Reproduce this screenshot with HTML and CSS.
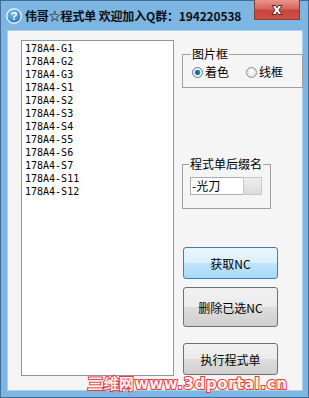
FILE: index.html
```html
<!DOCTYPE html>
<html>
<head>
<meta charset="utf-8">
<link rel="stylesheet" href="styles.css">
</head>
<body>
<div class="window">
  <div class="titlebar">
    <svg class="help-icon" width="16" height="16" viewBox="0 0 16 16">
      <defs>
        <radialGradient id="hg" cx="0.4" cy="0.3" r="0.8">
          <stop offset="0" stop-color="#7cc0f0"/>
          <stop offset="1" stop-color="#1f6db8"/>
        </radialGradient>
      </defs>
      <circle cx="8" cy="8" r="7.2" fill="url(#hg)" stroke="#ffffff" stroke-width="1.2"/>
      <text x="8" y="12.2" text-anchor="middle" font-family="Liberation Sans, sans-serif" font-weight="bold" font-size="11" fill="#ffffff">?</text>
    </svg>
    <div class="title">伟哥☆程式单 欢迎加入Q群：194220538</div>
    <div class="close-btn">
      <svg width="18" height="12" viewBox="0 0 18 12">
        <path d="M4 1.5 L7.5 1.5 L9 3.8 L10.5 1.5 L14 1.5 L11 6 L14 10.5 L10.5 10.5 L9 8.2 L7.5 10.5 L4 10.5 L7 6 Z" fill="#ffffff" stroke="#4a2a2a" stroke-width="1"/>
      </svg>
    </div>
  </div>
  <div class="client">
    <div class="listbox">
      <div class="item">178A4-G1</div>
      <div class="item">178A4-G2</div>
      <div class="item">178A4-G3</div>
      <div class="item">178A4-S1</div>
      <div class="item">178A4-S2</div>
      <div class="item">178A4-S3</div>
      <div class="item">178A4-S4</div>
      <div class="item">178A4-S5</div>
      <div class="item">178A4-S6</div>
      <div class="item">178A4-S7</div>
      <div class="item">178A4-S11</div>
      <div class="item">178A4-S12</div>
    </div>
    <div class="side">
      <fieldset class="group group-frame">
        <legend>图片框</legend>
        <div class="radio-row">
          <span class="radio checked"></span><span class="radio-label">着色</span>
          <span class="radio second"></span><span class="radio-label">线框</span>
        </div>
      </fieldset>
      <fieldset class="group group-suffix">
        <legend>程式单后缀名</legend>
        <div class="combo">
          <span class="combo-field">-光刀</span>
          <span class="combo-btn"></span>
        </div>
      </fieldset>
      <div class="btn btn-focus">获取NC</div>
      <div class="btn btn-tall">删除已选NC</div>
      <div class="btn btn-last">执行程式单</div>
    </div>
    <div class="watermark">三维网www.3dportal.cn</div>
  </div>
</div>
</body>
</html>
```
FILE: styles.css
```css
html, body {
  margin: 0;
  padding: 0;
  background: #7db5e3;
}
.window {
  position: relative;
  width: 309px;
  height: 398px;
  box-sizing: border-box;
  border: 1px solid #3f6d96;
  background: #7db5e3;
  display: flex;
  flex-direction: column;
  font-family: "Noto Sans CJK SC", sans-serif;
}
.titlebar {
  height: 29px;
  display: flex;
  align-items: center;
  position: relative;
}
.help-icon {
  margin-left: 5px;
  margin-top: 1px;
}
.title {
  margin-left: 3px;
  font-family: "Noto Sans CJK SC", sans-serif;
  font-weight: bold;
  font-size: 12px;
  color: #101010;
  white-space: nowrap;
  letter-spacing: -0.15px;
}
.close-btn {
  position: absolute;
  left: 253px;
  top: -1px;
  width: 46px;
  height: 20px;
  box-sizing: border-box;
  border: 1px solid #8a3a34;
  border-top: none;
  background: linear-gradient(#e7968d 0%, #d8675c 45%, #c8443a 55%, #cf5046 100%);
  display: flex;
  align-items: center;
  justify-content: center;
}
.client {
  position: relative;
  flex: 1;
  margin: 0 5px 6px 6px;
  border: 1px solid #a9d2f2;
  background: #f5f5f5;
  display: grid;
  grid-template-columns: 153px 1fr;
  column-gap: 8px;
  padding: 9px 0 0 13px;
  align-items: start;
}
.listbox {
  height: 336px;
  box-sizing: border-box;
  border: 1px solid #8a98a6;
  background: #ffffff;
  padding: 1px 0 0 3px;
  font-family: "DejaVu Sans Mono", monospace;
  font-size: 10px;
  line-height: 13px;
  color: #000;
}
.side {
  display: flex;
  flex-direction: column;
  align-items: flex-start;
}
.group {
  margin: 0;
  padding: 0 0 0 9px;
  border: 1px solid #a0a0a0;
  min-width: 0;
  box-sizing: border-box;
}
.group legend {
  padding: 0 1px;
  margin-left: -1px;
  font-size: 12px;
  line-height: 14px;
  height: 14px;
  color: #000;
}
.group-frame {
  margin-top: 7px;
  width: 121px;
  padding-bottom: 8px;
}
.radio-row {
  display: flex;
  align-items: center;
  height: 14px;
  margin-top: 4px;
  font-size: 12px;
  line-height: 14px;
}
.radio {
  width: 11px;
  height: 11px;
  box-sizing: border-box;
  border-radius: 50%;
  border: 1px solid #8e8f8f;
  background: radial-gradient(circle at 50% 40%, #ffffff, #d7d7d7);
}
.radio.checked {
  background: radial-gradient(circle, #1d5a8a 0, #2d85bf 2.5px, #ffffff 3.2px, #e6e6e6 5px);
  border-color: #4b7ba2;
}
.radio.second {
  margin-left: 17px;
}
.radio-label {
  margin-left: 2px;
}
.group-suffix {
  margin-top: 69px;
  width: 89px;
  padding-left: 7px;
  padding-bottom: 13px;
}
.combo {
  display: flex;
  margin-top: 6px;
  height: 18px;
}
.combo-field {
  width: 53px;
  height: 18px;
  box-sizing: border-box;
  border: 1px solid #abadb3;
  border-right: none;
  background: #ffffff;
  font-size: 12px;
  line-height: 16px;
  padding-left: 1px;
  color: #000;
}
.combo-btn {
  width: 19px;
  height: 18px;
  box-sizing: border-box;
  border: 1px solid #c8c8c8;
  background: linear-gradient(#eeeeee, #dcdcdc);
}
.btn {
  width: 95px;
  height: 32px;
  box-sizing: border-box;
  border: 1px solid #707070;
  border-radius: 3px;
  background: linear-gradient(#f2f2f2 0%, #ebebeb 50%, #dddddd 51%, #cfcfcf 100%);
  display: flex;
  align-items: center;
  justify-content: center;
  font-size: 12px;
  color: #000;
  margin-left: 1px;
}
.btn-focus {
  margin-top: 38px;
  border-color: #3c7fb1;
  background: linear-gradient(#eaf6fd 0%, #d9f0fc 50%, #bee6fd 51%, #a7d9f5 100%);
}
.btn-tall {
  margin-top: 8px;
  height: 40px;
}
.btn-last {
  margin-top: 16px;
}
.watermark {
  position: absolute;
  left: 80px;
  top: 345px;
  font-family: "DejaVu Sans", sans-serif;
  font-weight: bold;
  font-size: 15px;
  line-height: 17px;
  color: #ffeef1;
  letter-spacing: 0.6px;
  white-space: nowrap;
  -webkit-text-stroke: 2px #e2403c;
  paint-order: stroke fill;
}
```
